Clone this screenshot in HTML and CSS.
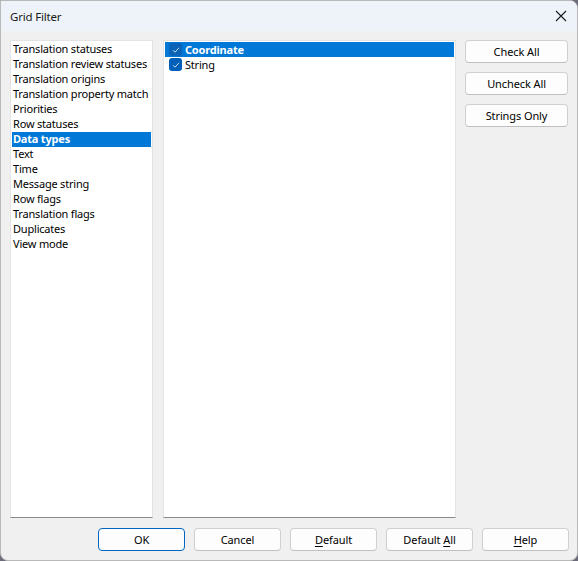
FILE: index.html
```html
<!DOCTYPE html>
<html>
<head>
<meta charset="utf-8">
<link rel="stylesheet" href="styles.css">
</head>
<body>
<div class="window">
  <div class="titlebar">
    <span class="title">Grid Filter</span>
    <svg class="close" width="12" height="12" viewBox="0 0 12 12"><path d="M1 1 L11 11 M11 1 L1 11" stroke="#1a1a1a" stroke-width="1.1" fill="none"/></svg>
  </div>
  <div class="main">
    <ul class="list categories">
      <li>Translation statuses</li>
      <li>Translation review statuses</li>
      <li>Translation origins</li>
      <li>Translation property match</li>
      <li>Priorities</li>
      <li>Row statuses</li>
      <li class="selected">Data types</li>
      <li>Text</li>
      <li>Time</li>
      <li>Message string</li>
      <li>Row flags</li>
      <li>Translation flags</li>
      <li>Duplicates</li>
      <li>View mode</li>
    </ul>
    <ul class="list values">
      <li class="selected"><span class="check"><svg width="8" height="8" viewBox="0 0 8 8"><path d="M1 4.2 L3 6.2 L7 1.8" stroke="#ffffff" stroke-width="0.9" fill="none" opacity="0.85"/></svg></span>Coordinate</li>
      <li><span class="check"><svg width="8" height="8" viewBox="0 0 8 8"><path d="M1 4.2 L3 6.2 L7 1.8" stroke="#ffffff" stroke-width="0.9" fill="none" opacity="0.85"/></svg></span>String</li>
    </ul>
    <div class="side">
      <button class="btn">Check All</button>
      <button class="btn">Uncheck All</button>
      <button class="btn">Strings Only</button>
    </div>
  </div>
  <div class="footer">
    <button class="btn default">OK</button>
    <button class="btn">Cancel</button>
    <button class="btn"><u>D</u>efault</button>
    <button class="btn">Default <u>A</u>ll</button>
    <button class="btn"><u>H</u>elp</button>
  </div>
</div>
</body>
</html>
```
FILE: styles.css
```css
html, body {
  margin: 0;
  padding: 0;
  background: #6b6b7a;
}
body {
  width: 578px;
  height: 561px;
  overflow: hidden;
  font-family: "Segoe UI", "Noto Sans", sans-serif;
  font-size: 11px;
  letter-spacing: -0.2px;
  color: #000;
}
.window {
  box-sizing: border-box;
  width: 578px;
  height: 561px;
  background: #f0f0f0;
  border: 1px solid #b9b9b9;
  border-radius: 0 8px 8px 8px;
  display: flex;
  flex-direction: column;
  overflow: hidden;
}
.titlebar {
  height: 30px;
  flex: none;
  background: #eef3f9;
  display: flex;
  align-items: center;
  justify-content: space-between;
  padding: 0 10px 0 9px;
}
.title {
  font-size: 11.5px;
  color: #1a1a1a;
  padding-top: 1px;
}
.close {
  display: block;
}
.main {
  display: flex;
  padding: 9px 9px 0 9px;
  height: 478px;
  flex: none;
}
.list {
  list-style: none;
  margin: 0;
  padding: 0 1px 1px 1px;
  background: #fff;
  border: 1px solid #e3e3e3;
  border-bottom-color: #8a8a8a;
  box-sizing: border-box;
  height: 478px;
}
.list li {
  height: 15px;
  line-height: 14px;
  white-space: nowrap;
}
.categories li:first-child,
.values li:first-child {
  margin-top: 1px;
}
.list li.selected {
  background: #0078d7;
  color: #fff;
  font-weight: bold;
}
.categories {
  width: 143px;
  margin-right: 10px;
}
.categories li {
  padding-left: 1px;
}
.values {
  width: 293px;
  margin-right: 9px;
}
.values li {
  display: flex;
  align-items: center;
  padding-left: 4px;
}
.check {
  width: 13px;
  height: 13px;
  box-sizing: border-box;
  border-radius: 3px;
  background: #005fb8;
  display: flex;
  align-items: center;
  justify-content: center;
  margin-right: 3px;
  flex: none;
}
.check svg {
  display: block;
}
.selected .check {
  background: #0b63b7;
}
.side {
  display: flex;
  flex-direction: column;
  gap: 9px;
  width: 103px;
}
.btn {
  font-family: "Segoe UI", "Noto Sans", sans-serif;
  font-size: 11px;
  letter-spacing: -0.1px;
  color: #000;
  background: #fdfdfd;
  border: 1px solid #d0d0d0;
  border-bottom-color: #c0c0c0;
  border-radius: 4px;
  height: 23px;
  padding: 0;
  margin: 0;
  box-sizing: border-box;
  line-height: 20px;
}
.side .btn {
  width: 103px;
}
.footer {
  display: flex;
  justify-content: flex-end;
  gap: 9px;
  padding: 10px 8px 0 0;
}
.footer .btn {
  width: 87px;
}
.btn.default {
  border: 1px solid #0067c0;
}
.btn u {
  text-decoration-thickness: 1px;
  text-underline-offset: 2px;
}
```
